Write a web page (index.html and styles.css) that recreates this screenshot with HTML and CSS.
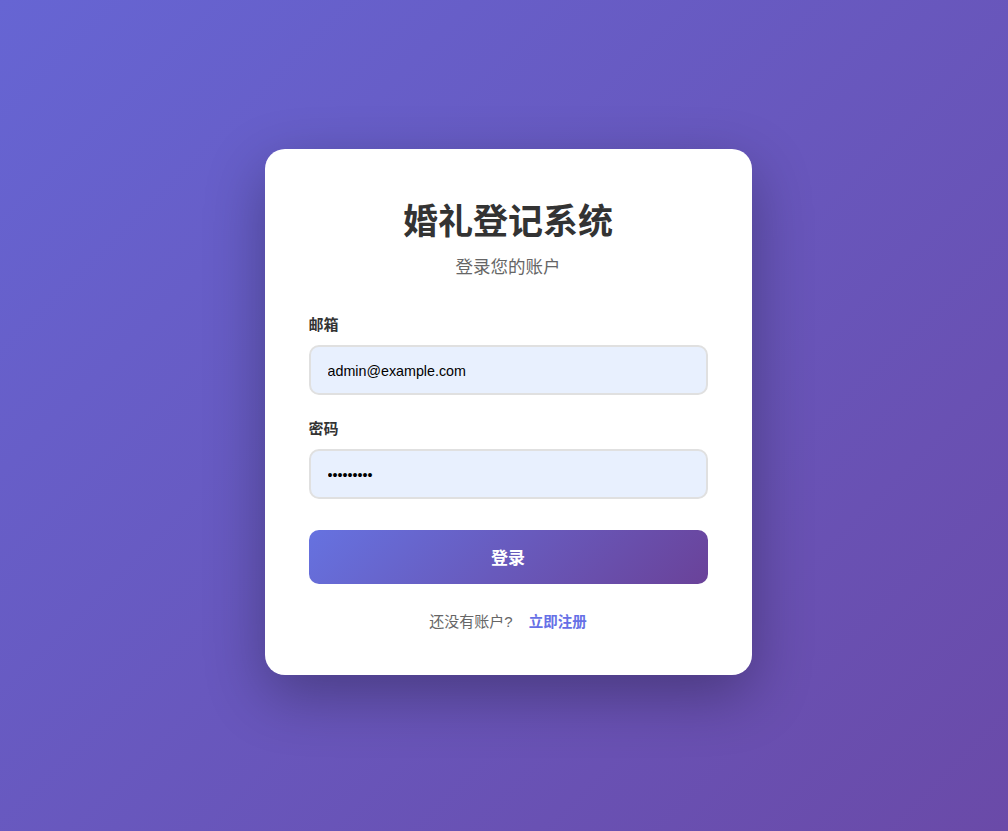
FILE: index.html
```html
<!DOCTYPE html>
<html lang="zh-CN">
<head>
<meta charset="utf-8">
<title>婚礼登记系统</title>
<link rel="stylesheet" href="styles.css">
</head>
<body>
<div class="page">
  <div class="card">
    <h1 class="title">婚礼登记系统</h1>
    <p class="subtitle">登录您的账户</p>
    <form class="form">
      <div class="field">
        <label class="label" for="email">邮箱</label>
        <input class="input" id="email" type="email" value="admin@example.com">
      </div>
      <div class="field">
        <label class="label" for="pwd">密码</label>
        <input class="input" id="pwd" type="password" value="admin1234">
      </div>
      <button class="btn" type="button">登录</button>
    </form>
    <p class="footer">还没有账户?<a class="link" href="#">立即注册</a></p>
  </div>
</div>
</body>
</html>
```
FILE: styles.css
```css
* { box-sizing: border-box; }
html, body { margin: 0; padding: 0; height: 100%; }
body {
  font-family: "Liberation Sans", "Noto Sans CJK SC", sans-serif;
  background: linear-gradient(135deg, #6665d3 0%, #6a4aa8 100%);
  color: #333;
}
.page {
  min-height: 100vh;
  display: flex;
  align-items: center;
  justify-content: center;
  padding-left: 8px;
}
.card {
  width: 487px;
  background: #fff;
  border-radius: 20px;
  padding: 44px 44px 42px;
  box-shadow: 0 20px 60px rgba(0, 0, 0, 0.3);
  margin-top: -8px;
}
.title {
  margin: 0;
  font-size: 35px;
  line-height: 52px;
  font-weight: 700;
  text-align: center;
  color: #333;
  font-family: "Noto Sans CJK SC", sans-serif;
}
.subtitle {
  margin: 10px 0 0;
  font-size: 17.5px;
  line-height: 24px;
  text-align: center;
  color: #666;
}
.form {
  margin-top: 35px;
}
.field {
  display: flex;
  flex-direction: column;
  margin-bottom: 23px;
}
.label {
  font-size: 15px;
  line-height: 22px;
  font-weight: 700;
  color: #333;
  margin-bottom: 9px;
}
.input {
  height: 50px;
  width: 100%;
  border: 2px solid #e0e0e0;
  border-radius: 10px;
  background: #e8f0fe;
  padding: 2px 16px 0 17px;
  font-family: "Liberation Sans", sans-serif;
  font-size: 14.3px;
  color: #000;
  outline: none;
}
.field:last-of-type { margin-bottom: 31px; }
.btn {
  display: block;
  width: 100%;
  height: 54px;
  border: none;
  border-radius: 10px;
  background: linear-gradient(135deg, #6672e0 0%, #6a4299 100%);
  color: #fff;
  font-family: "Noto Sans CJK SC", sans-serif;
  font-size: 17px;
  font-weight: 700;
  cursor: pointer;
}
.footer {
  margin: 27px 0 0;
  text-align: center;
  font-size: 15px;
  line-height: 22px;
  color: #666;
}
.link {
  color: #6670e6;
  font-weight: 600;
  font-size: 14.5px;
  text-decoration: none;
  margin-left: 16px;
}
```
